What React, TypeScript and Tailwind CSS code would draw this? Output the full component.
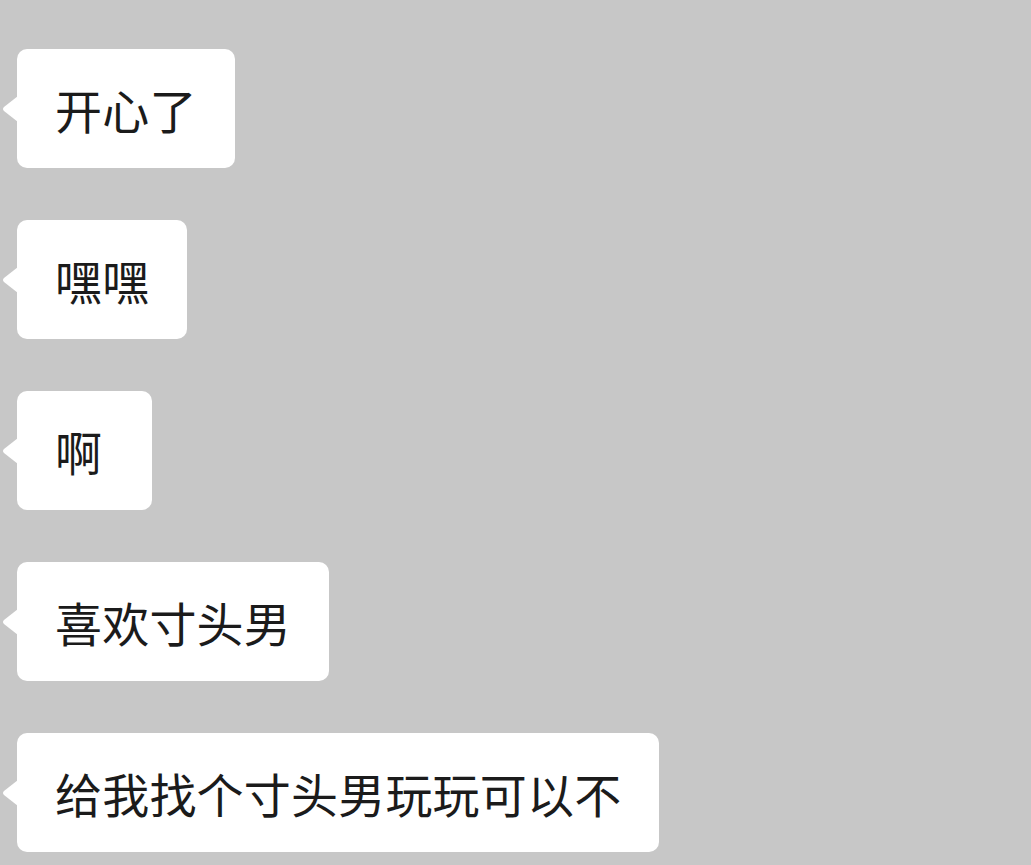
const messages = ["开心了", "嘿嘿", "啊", "喜欢寸头男", "给我找个寸头男玩玩可以不"];

function Bubble({ text }: { text: string }) {
  return (
    <div className="relative self-start">
      {/* tail */}
      <svg
        className="absolute left-[-15px] top-1/2 -translate-y-1/2"
        width="16"
        height="28"
        viewBox="0 0 16 28"
      >
        <path d="M16 1 L2 12 Q0 14 2 16 L16 27 Z" fill="#ffffff" />
      </svg>
      <div className="relative min-w-[135px] rounded-[10px] bg-white px-[38px] py-[36px] text-[47px] leading-[47px] tracking-[0.2px] text-[#1b1b1b]">
        {text}
      </div>
    </div>
  );
}

export default function App() {
  return (
    <div
      className="flex h-[865px] w-full flex-col gap-[52px] overflow-hidden bg-[#c7c7c7] pl-[17px] pt-[49px]"
      style={{ fontFamily: '"Noto Sans CJK SC", "Noto Sans", sans-serif' }}
    >
      {messages.map((m) => (
        <Bubble key={m} text={m} />
      ))}
    </div>
  );
}
